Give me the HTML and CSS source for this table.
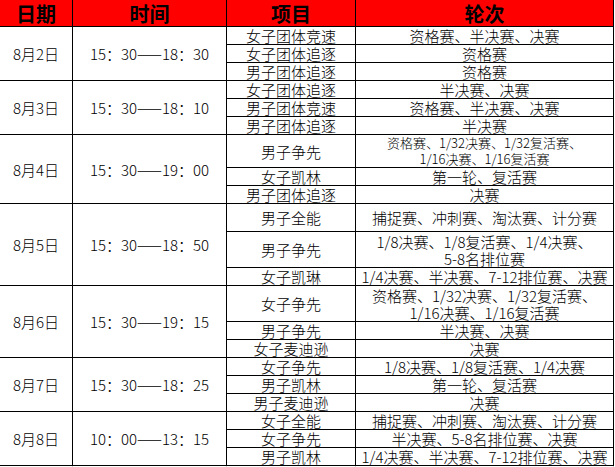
FILE: index.html
```html
<!DOCTYPE html>
<html lang="zh-CN">
<head>
<meta charset="utf-8">
<title>赛程表</title>
<link rel="stylesheet" href="styles.css">
</head>
<body>
<table class="sched">
  <thead>
    <tr class="head">
      <th class="c-date">日期</th>
      <th class="c-time">时间</th>
      <th class="c-event">项目</th>
      <th class="c-round">轮次</th>
    </tr>
  </thead>
  <tbody>
    <tr>
      <td rowspan="3" class="date">8月2日</td>
      <td rowspan="3" class="time">15：30——18：30</td>
      <td>女子团体竞速</td>
      <td>资格赛、半决赛、决赛</td>
    </tr>
    <tr><td>女子团体追逐</td><td>资格赛</td></tr>
    <tr><td>男子团体追逐</td><td>资格赛</td></tr>

    <tr>
      <td rowspan="3" class="date">8月3日</td>
      <td rowspan="3" class="time">15：30——18：10</td>
      <td>女子团体追逐</td>
      <td>半决赛、决赛</td>
    </tr>
    <tr><td>男子团体竞速</td><td>资格赛、半决赛、决赛</td></tr>
    <tr><td>男子团体追逐</td><td>半决赛</td></tr>

    <tr class="h32">
      <td rowspan="3" class="date">8月4日</td>
      <td rowspan="3" class="time">15：30——19：00</td>
      <td>男子争先</td>
      <td class="small">资格赛、1/32决赛、1/32复活赛、<br>1/16决赛、1/16复活赛</td>
    </tr>
    <tr><td>女子凯林</td><td>第一轮、复活赛</td></tr>
    <tr><td>男子团体追逐</td><td>决赛</td></tr>

    <tr class="h28">
      <td rowspan="3" class="date">8月5日</td>
      <td rowspan="3" class="time">15：30——18：50</td>
      <td>男子全能</td>
      <td>捕捉赛、冲刺赛、淘汰赛、计分赛</td>
    </tr>
    <tr class="h36"><td>男子争先</td><td class="two">1/8决赛、1/8复活赛、1/4决赛、<br>5-8名排位赛</td></tr>
    <tr><td>女子凯琳</td><td>1/4决赛、半决赛、7-12排位赛、决赛</td></tr>

    <tr class="h36">
      <td rowspan="3" class="date">8月6日</td>
      <td rowspan="3" class="time">15：30——19：15</td>
      <td>女子争先</td>
      <td class="two">资格赛、1/32决赛、1/32复活赛、<br>1/16决赛、1/16复活赛</td>
    </tr>
    <tr><td>男子争先</td><td>半决赛、决赛</td></tr>
    <tr><td>女子麦迪逊</td><td>决赛</td></tr>

    <tr>
      <td rowspan="3" class="date">8月7日</td>
      <td rowspan="3" class="time">15：30——18：25</td>
      <td>女子争先</td>
      <td>1/8决赛、1/8复活赛、1/4决赛</td>
    </tr>
    <tr><td>男子凯林</td><td>第一轮、复活赛</td></tr>
    <tr><td>男子麦迪逊</td><td>决赛</td></tr>

    <tr>
      <td rowspan="3" class="date">8月8日</td>
      <td rowspan="3" class="time">10：00——13：15</td>
      <td>女子全能</td>
      <td>捕捉赛、冲刺赛、淘汰赛、计分赛</td>
    </tr>
    <tr><td>女子争先</td><td>半决赛、5-8名排位赛、决赛</td></tr>
    <tr><td>男子凯林</td><td>1/4决赛、半决赛、7-12排位赛、决赛</td></tr>
  </tbody>
</table>
<div class="tail">
  <span class="t-date"></span><span class="t-time"></span><span class="t-event"></span><span class="t-round"></span>
</div>
</body>
</html>
```
FILE: styles.css
```css
html, body {
  margin: 0;
  padding: 0;
  background: #ffffff;
}
body {
  font-family: "Noto Sans CJK SC", "Noto Sans", sans-serif;
  color: #000000;
  overflow: hidden;
}
.sched {
  border-collapse: separate;
  border-spacing: 0;
  table-layout: fixed;
  width: 614px;
}
.sched th,
.sched td {
  box-sizing: border-box;
  padding: 0;
  border-right: 1px solid #000;
  border-bottom: 1px solid #000;
  text-align: center;
  vertical-align: middle;
  white-space: nowrap;
  font-size: 15px;
  line-height: 17px;
  font-weight: 300;
}
.c-date { width: 73px; }
.c-time { width: 154px; }
.c-event { width: 129px; }
.c-round { width: 258px; }

.head th {
  height: 27px;
  background: #ff0000;
  font-size: 20px;
  line-height: 24px;
  font-weight: bold;
  padding-top: 2px;
}
.sched tbody tr { height: 18px; }
.sched tbody tr.h28 { height: 28px; }
.sched tbody tr.h32 { height: 32px; }
.sched tbody tr.h36 { height: 36px; }

.sched td.small {
  font-size: 13px;
  line-height: 16px;
}
.sched td.two {
  line-height: 17px;
}
.tail {
  display: flex;
  width: 614px;
  height: 4px;
}
.tail span {
  box-sizing: border-box;
  height: 4px;
  border-right: 1px solid #d9d9d9;
}
.t-date { width: 73px; }
.t-time { width: 154px; }
.t-event { width: 129px; }
.t-round { width: 258px; }
```
